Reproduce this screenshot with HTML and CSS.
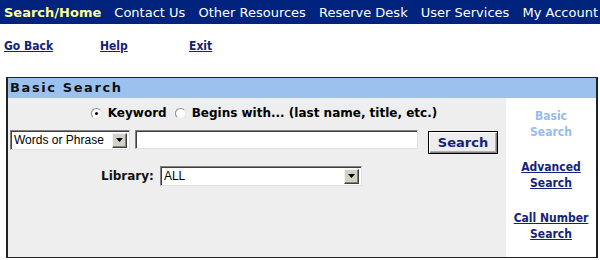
FILE: index.html
```html
<!DOCTYPE html>
<html lang="en">
<head>
<meta charset="utf-8">
<title>Basic Search</title>
<link rel="stylesheet" href="styles.css">
</head>
<body>
<nav class="topnav">
  <a class="nav-item nav-current" href="#">Search/Home</a>
  <a class="nav-item" href="#">Contact Us</a>
  <a class="nav-item" href="#">Other Resources</a>
  <a class="nav-item" href="#">Reserve Desk</a>
  <a class="nav-item" href="#">User Services</a>
  <a class="nav-item" href="#">My Account</a>
</nav>
<div class="actions">
  <a class="action" href="#">Go Back</a>
  <a class="action" href="#">Help</a>
  <a class="action" href="#">Exit</a>
</div>
<section class="panel">
  <h2 class="panel-title">Basic Search</h2>
  <div class="panel-body">
    <form class="search-form">
      <div class="radio-row">
        <label class="radio"><input type="radio" name="mode" checked><span>Keyword</span></label>
        <label class="radio"><input type="radio" name="mode"><span>Begins with... (last name, title, etc.)</span></label>
      </div>
      <div class="query-row">
        <div class="select select-type">
          <span class="select-value">Words or Phrase</span>
          <span class="select-btn"><svg width="7" height="4" viewBox="0 0 7 4"><path d="M0 0h7L3.5 4z" fill="#000"/></svg></span>
        </div>
        <input class="text-input" type="text">
        <button class="btn" type="button">Search</button>
      </div>
      <div class="library-row">
        <span class="field-label">Library:</span>
        <div class="select select-library">
          <span class="select-value">ALL</span>
          <span class="select-btn"><svg width="7" height="4" viewBox="0 0 7 4"><path d="M0 0h7L3.5 4z" fill="#000"/></svg></span>
        </div>
      </div>
    </form>
    <aside class="side">
      <span class="side-link side-current">Basic<br>Search</span>
      <a class="side-link" href="#">Advanced<br>Search</a>
      <a class="side-link" href="#">Call Number<br>Search</a>
    </aside>
  </div>
</section>
</body>
</html>
```

FILE: styles.css
```css
* { box-sizing: border-box; }

body {
  margin: 0;
  background: #fff;
  font-family: "DejaVu Sans", Verdana, sans-serif;
  color: #000;
}

.topnav {
  display: flex;
  justify-content: space-between;
  align-items: center;
  height: 24px;
  padding: 2px 2px 0 4px;
  background: #00247d;
}

.nav-item {
  color: #fff;
  text-decoration: none;
  font-size: 13px;
  line-height: 16px;
}

.nav-current {
  color: #ffff99;
  font-weight: bold;
}

.actions {
  display: grid;
  grid-template-columns: 96px 89px auto;
  padding-left: 4px;
  margin-top: 14px;
  height: 16px;
}

.action,
.side-link {
  font-family: "DejaVu Sans Condensed", "Liberation Sans", sans-serif;
  font-weight: bold;
  font-size: 12px;
  line-height: 16px;
  color: #14237a;
  text-decoration: underline;
  justify-self: start;
}

.panel {
  margin: 23px 0 0 6px;
  width: 592px;
  border: 1px solid #222;
  border-left-width: 2px;
  border-right-width: 2px;
}

.panel-title {
  margin: 0;
  height: 20px;
  padding-left: 2px;
  background: #9bc1ef;
  font-size: 13px;
  line-height: 20px;
  font-weight: bold;
  letter-spacing: 1.6px;
  color: #111;
}

.panel-body {
  display: flex;
  height: 159px;
}

.search-form {
  flex: 1;
  background: #eeeeee;
  padding: 7px 0 0 2px;
}

.radio-row {
  display: flex;
  justify-content: center;
  gap: 8px;
  height: 16px;
  padding-left: 12px;
  font-size: 12px;
  font-weight: bold;
  line-height: 16px;
}

.radio {
  display: flex;
  align-items: center;
  gap: 6px;
}

.radio input {
  appearance: none;
  margin: 0;
  width: 11px;
  height: 11px;
  border-radius: 50%;
  border: 1px solid;
  border-color: #8a8a8a #e6e6e6 #e6e6e6 #8a8a8a;
  background: #fff;
  display: grid;
  place-items: center;
}

.radio input:checked::after {
  content: "";
  width: 3px;
  height: 3px;
  border-radius: 50%;
  background: #000;
}

.query-row {
  display: flex;
  align-items: flex-start;
  margin-top: 9px;
  height: 23px;
}

.select {
  display: flex;
  align-items: center;
  height: 20px;
  background: #fff;
  border: 1px solid;
  border-color: #808080 #e0e0e0 #e0e0e0 #808080;
  box-shadow: inset 1px 1px #404040;
  padding: 2px 2px 2px 3px;
}

.select-value {
  flex: 1;
  font-family: "Liberation Sans", Arial, sans-serif;
  font-size: 12px;
  line-height: 14px;
  color: #000;
}

.select-btn {
  width: 15px;
  height: 15px;
  background: #d4d0c8;
  border: 1px solid;
  border-color: #f4f4f4 #404040 #404040 #f4f4f4;
  box-shadow: inset -1px -1px #808080;
  display: grid;
  place-items: center;
}

.select-type {
  width: 120px;
}

.text-input {
  width: 283px;
  height: 19px;
  margin: 0 0 0 5px;
  border: 1px solid;
  border-color: #808080 #e0e0e0 #e0e0e0 #808080;
  box-shadow: inset 1px 1px #404040;
  background: #fff;
  padding: 0 2px;
}

.btn {
  width: 70px;
  height: 23px;
  margin: 1px 0 0 10px;
  background: #ededed;
  border: 1px solid #000;
  box-shadow: inset 1px 1px #fff, inset -1px -1px #808080, inset -2px -2px #b0b0b0;
  font-family: "DejaVu Sans", Verdana, sans-serif;
  font-weight: bold;
  font-size: 13px;
  color: #14237a;
  padding: 0;
}

.library-row {
  display: flex;
  align-items: center;
  gap: 6px;
  margin: 13px 0 0 91px;
  height: 20px;
}

.field-label {
  font-size: 12px;
  font-weight: bold;
  color: #111;
}

.select-library {
  width: 202px;
}

.side {
  width: 90px;
  background: #fff;
  display: flex;
  flex-direction: column;
  align-items: center;
  gap: 19px;
  padding-top: 10px;
  text-align: center;
}

.side-current {
  color: #99bbee;
  text-decoration: none;
}
```
